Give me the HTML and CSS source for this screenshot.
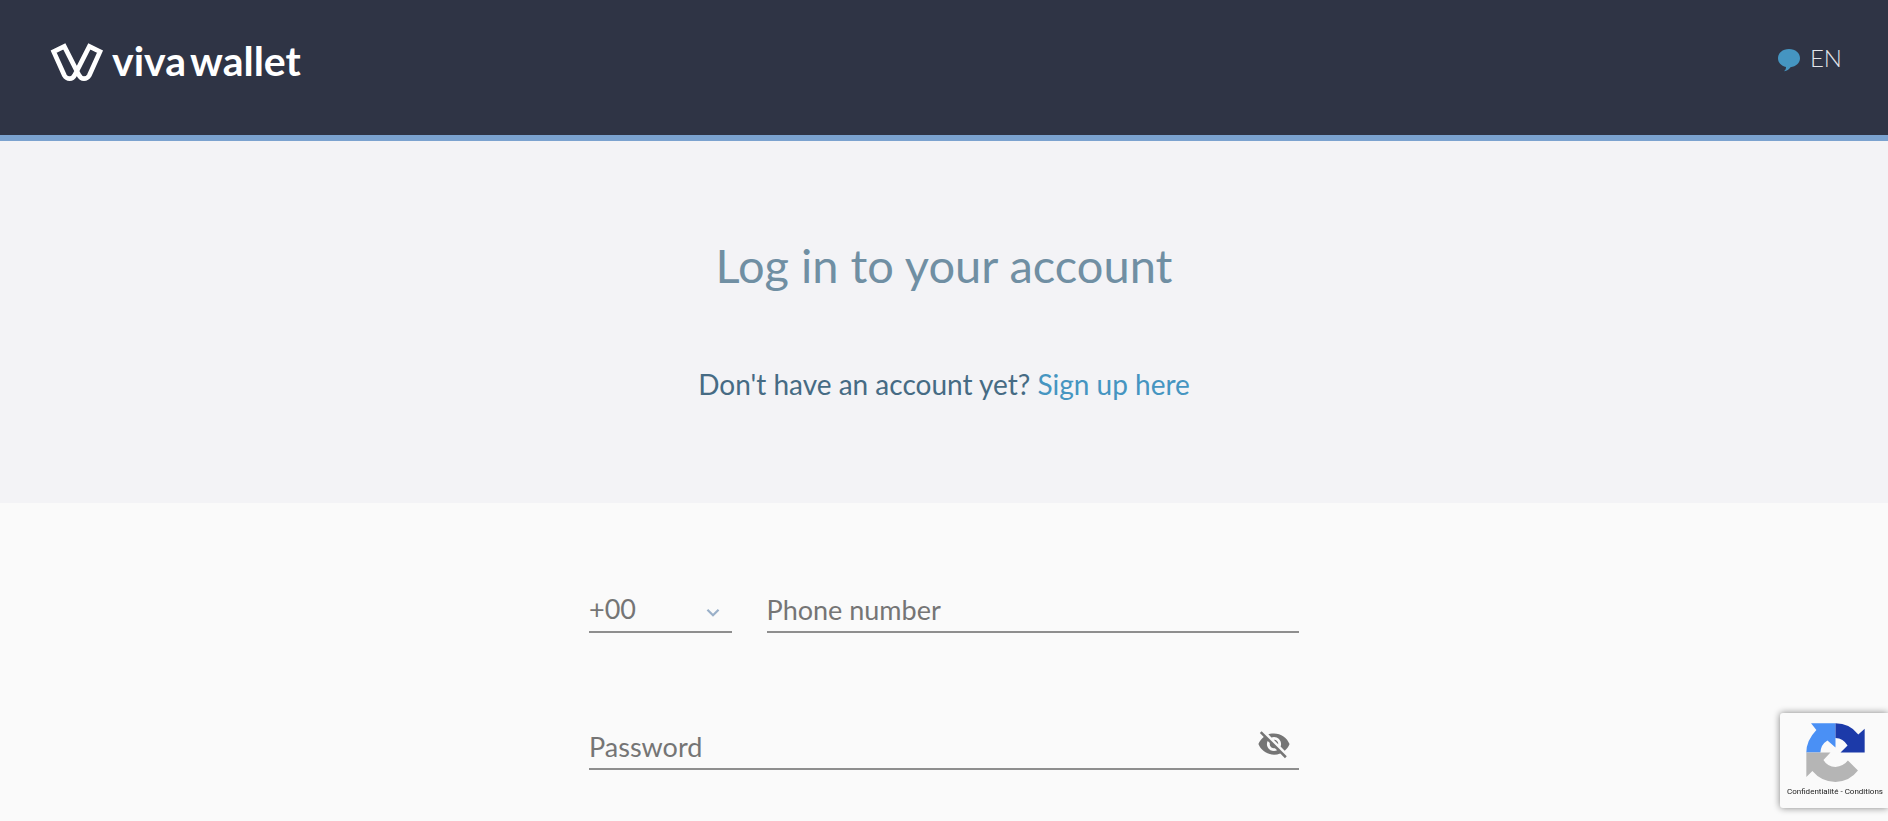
FILE: index.html
```html
<!doctype html>
<html lang="en">

<head>
  <meta charset="utf-8">
  <meta name="viewport" content="width=device-width, initial-scale=1">
  <title>Log in - Viva Wallet</title>
  <link rel="stylesheet" href="styles.css">
</head>

<body>
  <header class="header">
    <a class="logo" href="#" aria-label="viva wallet">
      <svg class="logo-mark" viewBox="60 67 162 120" fill="none" stroke="#fff" stroke-width="14">
        <path d="M71 96L103 80L146 165Q152 177 162 177Q172 177 178 167L210 96L178 80L135 165Q129 177 119 177Q109 177 103 167Z"/>
      </svg>
      <span class="logo-text"><span>viva</span><span>wallet</span></span>
    </a>
    <button class="language" type="button">
      <svg class="bubble" viewBox="0 0 24 24">
        <path fill="#4595c1" d="M12 1C5.500 1 1 5 1 10.200C1 14.500 4 17.800 9 19C9 21 8.500 22 7 23.200C10 23 12 21.500 13.500 19.200C19 18.500 23 15 23 10.200C23 5 18.500 1 12 1Z"/>
      </svg>
      EN
    </button>
  </header>

  <div class="intro">
    <h1>Log in to your account</h1>
    <p>Don't have an account yet? <a href="#">Sign up here</a></p>
  </div>

  <form class="login">
    <div class="row">
      <div class="field country">
        <select aria-label="Country code">
          <option>+00</option>
        </select>
        <svg class="arrow" viewBox="0 0 12 9">
          <path d="M1 1.500L6 6.500L11 1.500" fill="none" stroke="#9ab0c9" stroke-width="2"/>
        </svg>
      </div>
      <div class="field phone">
        <input type="tel" placeholder="Phone number" aria-label="Phone number">
      </div>
    </div>
    <div class="field password">
      <input type="password" placeholder="Password" aria-label="Password">
      <button class="toggle" type="button" aria-label="Show password">
        <svg viewBox="0 0 24 24" fill="#757575">
          <path d="M12 7c2.760 0 5 2.240 5 5 0 .65-.13 1.260-.36 1.830l2.920 2.920c1.510-1.260 2.700-2.890 3.430-4.750-1.730-4.390-6-7.500-11-7.500-1.400 0-2.740.25-3.980.7l2.160 2.160C10.740 7.130 11.350 7 12 7zM2 4.270l2.280 2.280.46.46C3.080 8.300 1.780 10.020 1 12c1.730 4.390 6 7.500 11 7.500 1.550 0 3.030-.3 4.380-.84l.42.42L19.730 22 21 20.730 3.270 3 2 4.270zM7.530 9.800l1.550 1.550c-.05.21-.08.43-.08.65 0 1.660 1.340 3 3 3 .22 0 .44-.03.65-.08l1.550 1.550c-.67.33-1.410.53-2.200.53-2.760 0-5-2.240-5-5 0-.79.2-1.530.53-2.200zm4.310-.78l3.150 3.150.02-.16c0-1.660-1.340-3-3-3l-.17.01z"/>
        </svg>
      </button>
    </div>
  </form>

  <div class="badge">
    <svg class="badge-logo" viewBox="0 0 176 176">
      <path fill="#4a90f5" d="M88 1V73L64 52Q44 64 43 88H1Q1 52 31 21L15 1Z"/>
      <path fill="#1c3aa9" d="M88 1Q130 1 156 34L175 17V88H103L124 67Q111 46 88 45Z"/>
      <path fill="#b5b5b5" d="M1 88H73L52 110Q64 130 88 131Q111 130 125 112L155 142Q130 175 88 176Q46 175 19 143L1 161Z"/>
    </svg>
    <div class="badge-links"><a href="#">Confidentialité</a> - <a href="#">Conditions</a></div>
  </div>
</body>

</html>
```

FILE: styles.css
```css
* {
  box-sizing: border-box;
}

body {
  margin: 0;
  background: #fafafa;
  font-family: Lato, "Open Sans", sans-serif;
  font-size: 27px;
  line-height: 32px;
}

a {
  color: #4595c1;
  text-decoration: none;
}

button,
input,
select {
  border: 0;
  padding: 0;
  background: none;
  font: inherit;
}

.header {
  display: flex;
  justify-content: space-between;
  align-items: flex-start;
  height: 141px;
  padding: 42px 46px 0 50px;
  background: #2f3445;
  border-bottom: 6px solid #7ba2cf;
}

.logo {
  display: flex;
  gap: 8px;
  color: #fff;
}

.logo-mark {
  width: 54px;
  height: 40px;
}

.logo-text {
  display: flex;
  gap: 4px;
  font-size: 41px;
  font-weight: 700;
  line-height: 38px;
}

.language {
  display: flex;
  align-items: center;
  gap: 9px;
  color: #e3e5ea;
  font-size: 24px;
  font-weight: 300;
}

.bubble {
  width: 24px;
  height: 24px;
  margin-top: 4px;
}

.intro {
  padding: 97px 20px 103px;
  background: #f3f3f6;
  text-align: center;
}

.intro h1 {
  margin: 0 0 76px;
  color: #708fa3;
  font-size: 47px;
  font-weight: 400;
  line-height: 54px;
}

.intro p {
  margin: 0;
  color: #466b84;
  font-size: 28px;
}

.login {
  max-width: 710px;
  margin: 0 auto;
  padding: 80px 0;
}

.row {
  display: flex;
  gap: 35px;
}

.field {
  display: flex;
  align-items: center;
  height: 50px;
  border-bottom: 2px solid #8e8e8e;
}

.field input,
.field select {
  flex: 1;
  min-width: 0;
  height: 48px;
  padding-top: 4px;
  color: #757575;
  outline: none;
}

.field input::placeholder {
  color: #757575;
}

.country {
  flex: 1;
}

.phone {
  flex: 0 0 75%;
}

.country select {
  appearance: none;
}

.arrow {
  width: 14px;
  height: 10px;
  margin: 12px 12px 0 0;
}

.password {
  margin-top: 87px;
}

.toggle {
  width: 34px;
  height: 34px;
  margin-right: 8px;
}

.toggle svg {
  display: block;
}

.badge {
  position: fixed;
  right: 0;
  bottom: 13px;
  width: 108px;
  height: 95px;
  padding: 10px 0 0 2px;
  background: #fafafa;
  border-radius: 3px 0 0 3px;
  box-shadow: 0 0 7px #808080;
  text-align: center;
}

.badge-logo {
  display: block;
  width: 59px;
  height: 59px;
  margin: 0 auto;
}

.badge-links {
  font-family: Roboto, sans-serif;
  font-size: 8px;
  line-height: 19px;
  white-space: nowrap;
}

.badge-links,
.badge-links a {
  color: #222;
}
```
